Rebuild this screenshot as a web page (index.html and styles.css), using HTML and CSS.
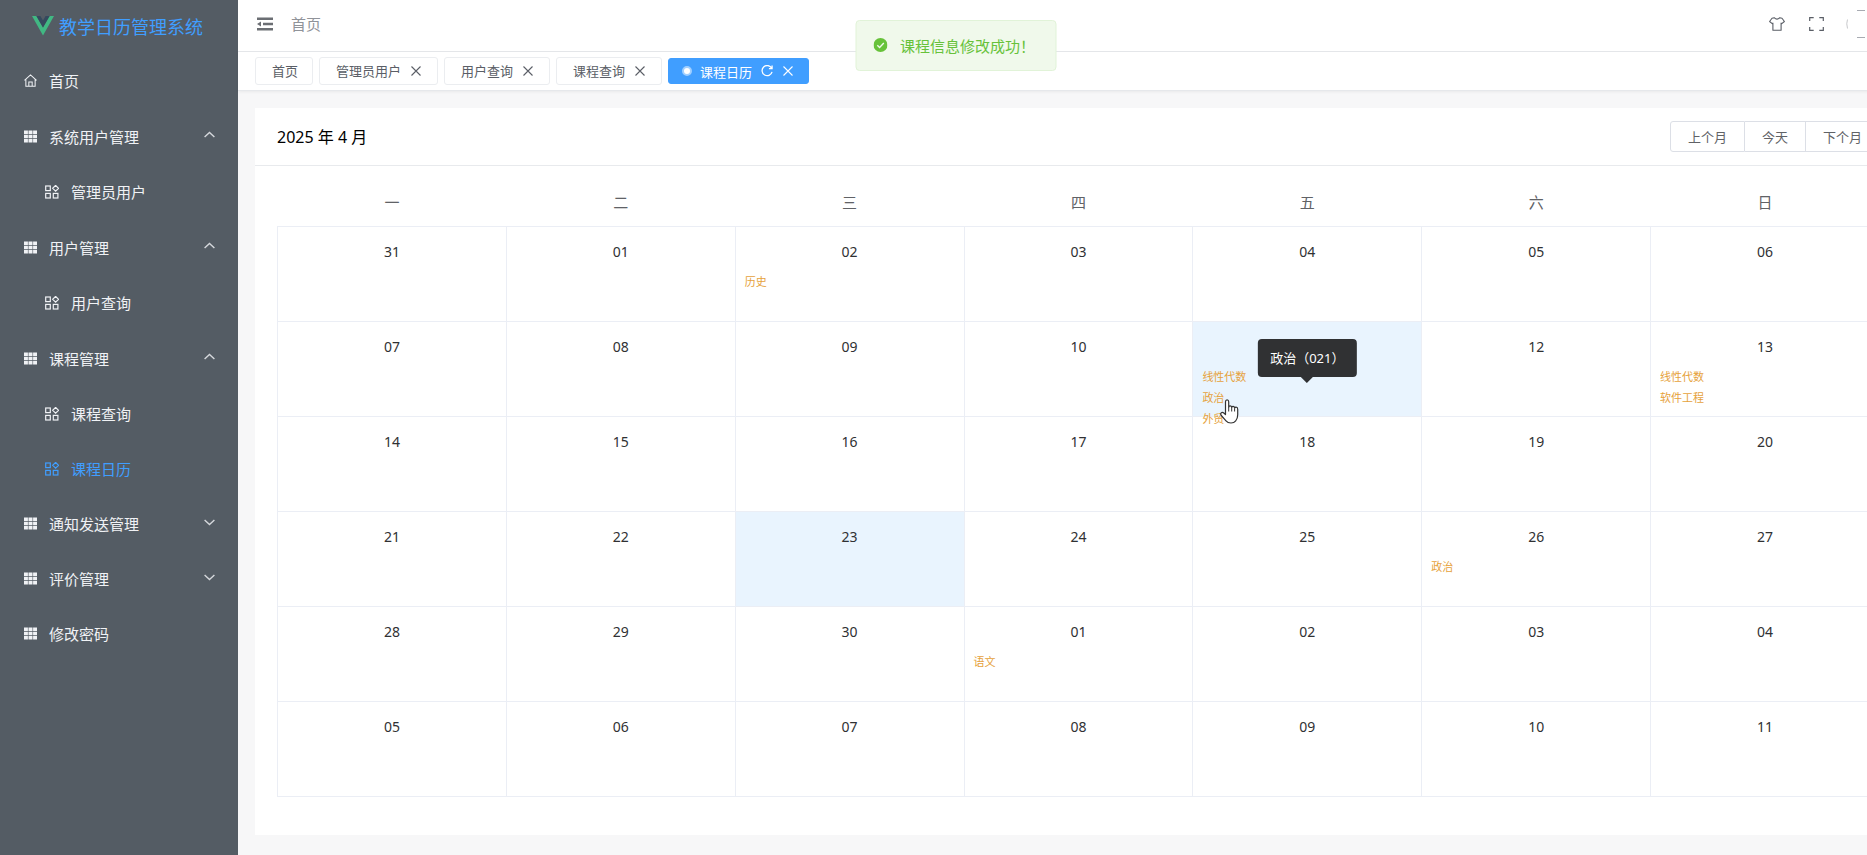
FILE: index.html
```html
<!DOCTYPE html>
<html lang="zh-CN">
<head>
    <meta charset="UTF-8">
    <meta name="viewport" content="width=device-width, initial-scale=1.0">
    <title>教学日历管理系统</title>
    <link rel="stylesheet" href="styles.css">
</head>
<body>
    <!-- shared icons -->
    <svg class="sprite" aria-hidden="true">
        <symbol id="i-grid" viewBox="0 0 13 13"><path fill="currentColor" d="M0 .5h3.9v3.6H0zM4.500.5h4v3.600h-4zM9.100.5H13v3.600H9.100zM0 4.700h3.900v3.600H0zM4.500 4.700h4v3.600h-4zM9.100 4.700H13v3.600H9.100zM0 8.900h3.900v3.600H0zM4.500 8.900h4v3.600h-4zM9.100 8.900H13v3.600H9.100z"/></symbol>
        <symbol id="i-menu" viewBox="0 0 14 14"><g fill="none" stroke="currentColor" stroke-width="1.2"><rect x=".7" y="1" width="4.6" height="4.6"/><path d="M10.6.4l2.9 2.9-2.9 2.9-2.9-2.9z"/><rect x=".7" y="8.4" width="4.6" height="4.6"/><rect x="8.3" y="8.4" width="4.6" height="4.6"/></g></symbol>
        <symbol id="i-close" viewBox="0 0 10 10"><path fill="none" stroke="currentColor" stroke-width="1.1" d="M.5.5l9 9M9.5.5l-9 9"/></symbol>
        <symbol id="i-arrow" viewBox="0 0 11 7"><path fill="none" stroke="currentColor" stroke-width="1.4" d="M.6 6l4.9-4.6L10.4 6"/></symbol>
    </svg>

    <div class="app">
        <aside class="sidebar">
            <div class="logo">
                <svg width="22" height="20" viewBox="0 0 22 20"><path fill="#41b883" d="M0 0h4.4L11 11.6 17.6 0H22L11 19.4z"/><path fill="#35495e" d="M4.4 0h4L11 4.6 13.600 0h4L11 11.600z"/></svg>
                <span>教学日历管理系统</span>
            </div>
            <nav class="menu">
                <a class="item" href="#">
                    <svg class="icon" viewBox="0 0 14 14"><path fill="none" stroke="currentColor" stroke-width="1.1" d="M.5 6.800L7 1l6.500 5.800M2 5.800v7.500h10V5.800M5.200 13.300V8.500h3.600v4.800"/></svg>
                    首页
                </a>
                <a class="item group" href="#"><svg class="icon"><use href="#i-grid"/></svg>系统用户管理<svg class="arrow"><use href="#i-arrow"/></svg></a>
                <a class="item sub" href="#"><svg class="icon"><use href="#i-menu"/></svg>管理员用户</a>
                <a class="item group" href="#"><svg class="icon"><use href="#i-grid"/></svg>用户管理<svg class="arrow"><use href="#i-arrow"/></svg></a>
                <a class="item sub" href="#"><svg class="icon"><use href="#i-menu"/></svg>用户查询</a>
                <a class="item group" href="#"><svg class="icon"><use href="#i-grid"/></svg>课程管理<svg class="arrow"><use href="#i-arrow"/></svg></a>
                <a class="item sub" href="#"><svg class="icon"><use href="#i-menu"/></svg>课程查询</a>
                <a class="item sub active" href="#"><svg class="icon"><use href="#i-menu"/></svg>课程日历</a>
                <a class="item" href="#"><svg class="icon"><use href="#i-grid"/></svg>通知发送管理<svg class="arrow down"><use href="#i-arrow"/></svg></a>
                <a class="item" href="#"><svg class="icon"><use href="#i-grid"/></svg>评价管理<svg class="arrow down"><use href="#i-arrow"/></svg></a>
                <a class="item" href="#"><svg class="icon"><use href="#i-grid"/></svg>修改密码</a>
            </nav>
        </aside>

        <div class="main">
            <header class="header">
                <button class="icon-btn" type="button" aria-label="折叠菜单">
                    <svg width="16" height="14" viewBox="0 0 16 14"><path fill="currentColor" d="M0 .5h16V3H0zM6 5.800h10v2.500H6zM0 11h16v2.500H0zM0 7l4-2.600v5.200z"/></svg>
                </button>
                <span class="crumb">首页</span>
                <div class="tools">
                    <button class="icon-btn" type="button" aria-label="主题">
                        <svg width="16" height="14" viewBox="0 0 16 14"><path fill="none" stroke="#5a5e66" stroke-width="1.100" stroke-linejoin="round" d="M5.200.700Q8 3.500 10.800.700L13 1.200l2.400 3.300-2.600 2.100-.700-.500v7.200H3.900V6.100l-.700.500L.600 4.500 3 1.200z"/></svg>
                    </button>
                    <button class="icon-btn" type="button" aria-label="全屏">
                        <svg width="16" height="14" viewBox="0 0 16 14"><path fill="none" stroke="#5a5e66" stroke-width="1.200" d="M.700 4V.700h4M10.300.700h4V4M14.300 10v3.300h-4M4.700 13.300h-4V10"/></svg>
                    </button>
                    <svg class="avatar" width="21" height="28" viewBox="0 0 21 28"><path fill="none" stroke="#c8c9cc" d="M2.500 9.500q-1.500 4 0 9"/><path stroke="#a8abb2" d="M12 .500h8M12 27.500h8"/></svg>
                </div>
            </header>

            <div class="tags">
                <a class="tag" href="#">首页</a>
                <a class="tag" href="#">管理员用户<svg class="close"><use href="#i-close"/></svg></a>
                <a class="tag" href="#">用户查询<svg class="close"><use href="#i-close"/></svg></a>
                <a class="tag" href="#">课程查询<svg class="close"><use href="#i-close"/></svg></a>
                <a class="tag current" href="#">
                    <span class="dot"></span>课程日历
                    <svg class="refresh" viewBox="0 0 13 13"><path fill="none" stroke="currentColor" stroke-width="1.400" d="M11.500 3.400A5.500 5.500 0 1 0 12 7.500M12 .600v3.400H8.600"/></svg>
                    <svg class="close"><use href="#i-close"/></svg>
                </a>
            </div>

            <main class="content">
                <section class="calendar">
                    <div class="cal-head">
                        <div class="cal-title">2025 年 4 月</div>
                        <div class="btns">
                            <button type="button">上个月</button>
                            <button type="button">今天</button>
                            <button type="button">下个月</button>
                        </div>
                    </div>
                    <div class="cal-body">
                        <table>
                            <thead>
                                <tr><th>一</th><th>二</th><th>三</th><th>四</th><th>五</th><th>六</th><th>日</th></tr>
                            </thead>
                            <tbody>
                                <tr>
                                    <td><div class="day"><p>31</p></div></td>
                                    <td><div class="day"><p>01</p></div></td>
                                    <td><div class="day"><p>02</p><span class="course">历史</span></div></td>
                                    <td><div class="day"><p>03</p></div></td>
                                    <td><div class="day"><p>04</p></div></td>
                                    <td><div class="day"><p>05</p></div></td>
                                    <td><div class="day"><p>06</p></div></td>
                                </tr>
                                <tr>
                                    <td><div class="day"><p>07</p></div></td>
                                    <td><div class="day"><p>08</p></div></td>
                                    <td><div class="day"><p>09</p></div></td>
                                    <td><div class="day"><p>10</p></div></td>
                                    <td class="on">
                                        <div class="day">
                                            <p>&nbsp;</p>
                                            <span class="course">线性代数</span>
                                            <span class="course">政治</span>
                                            <span class="course">外贸</span>
                                            <div class="tooltip" role="tooltip">政治（021）</div>
                                            <svg class="pointer" width="20" height="25" viewBox="0 0 20 25"><path fill="#fff" stroke="#333" stroke-width="1.200" stroke-linejoin="round" d="M5.500 15.500V2.700q0-1.900 1.600-1.900t1.600 1.900V8q.300-1.200 1.500-1.200T11.700 8.300q.400-.900 1.500-.900t1.400 1.500q.400-.700 1.500-.700 1.600 0 1.600 2v5.500q0 4-2 6.100-1.600 2.200-4.700 2.200-3.300 0-5-2.200L1.300 16.500q-1.100-1.600-.100-2.600 1.200-1 2.600.100z"/><path fill="none" stroke="#333" d="M8.700 8v4.500M11.700 8.500v4M14.600 9.200v3.300"/></svg>
                                        </div>
                                    </td>
                                    <td><div class="day"><p>12</p></div></td>
                                    <td><div class="day"><p>13</p><span class="course">线性代数</span><span class="course">软件工程</span></div></td>
                                </tr>
                                <tr>
                                    <td><div class="day"><p>14</p></div></td>
                                    <td><div class="day"><p>15</p></div></td>
                                    <td><div class="day"><p>16</p></div></td>
                                    <td><div class="day"><p>17</p></div></td>
                                    <td><div class="day"><p>18</p></div></td>
                                    <td><div class="day"><p>19</p></div></td>
                                    <td><div class="day"><p>20</p></div></td>
                                </tr>
                                <tr>
                                    <td><div class="day"><p>21</p></div></td>
                                    <td><div class="day"><p>22</p></div></td>
                                    <td class="on"><div class="day"><p>23</p></div></td>
                                    <td><div class="day"><p>24</p></div></td>
                                    <td><div class="day"><p>25</p></div></td>
                                    <td><div class="day"><p>26</p><span class="course">政治</span></div></td>
                                    <td><div class="day"><p>27</p></div></td>
                                </tr>
                                <tr>
                                    <td><div class="day"><p>28</p></div></td>
                                    <td><div class="day"><p>29</p></div></td>
                                    <td><div class="day"><p>30</p></div></td>
                                    <td><div class="day"><p>01</p><span class="course">语文</span></div></td>
                                    <td><div class="day"><p>02</p></div></td>
                                    <td><div class="day"><p>03</p></div></td>
                                    <td><div class="day"><p>04</p></div></td>
                                </tr>
                                <tr>
                                    <td><div class="day"><p>05</p></div></td>
                                    <td><div class="day"><p>06</p></div></td>
                                    <td><div class="day"><p>07</p></div></td>
                                    <td><div class="day"><p>08</p></div></td>
                                    <td><div class="day"><p>09</p></div></td>
                                    <td><div class="day"><p>10</p></div></td>
                                    <td><div class="day"><p>11</p></div></td>
                                </tr>
                            </tbody>
                        </table>
                    </div>
                </section>
            </main>
        </div>
    </div>

    <div class="message" role="alert">
        <svg width="14" height="14" viewBox="0 0 14 14"><circle cx="7" cy="7" r="7" fill="#67c23a"/><path fill="none" stroke="#f0f9eb" stroke-width="1.400" d="M3.800 7.200l2.300 2.200 4.200-4.300"/></svg>
        课程信息修改成功！
    </div>
</body>
</html>
```
FILE: styles.css
```css
* { box-sizing: border-box; }
body { margin: 0; overflow-x: hidden; font-family: "Noto Sans", "Noto Sans CJK SC", sans-serif; font-size: 15px; color: #303133; background: #f7f7f8; }
a { color: inherit; text-decoration: none; }
button { font-family: inherit; cursor: pointer; }
.sprite { display: none; }

/* the layout is a little wider than the window */
.app { display: flex; width: calc(100% + 52px); min-height: 100vh; }

/* sidebar */
.sidebar { flex: none; width: 238px; background: #545c64; color: #fff; }
.logo { display: flex; align-items: center; gap: 5px; height: 53px; padding: 0 0 2px 32px; color: #409eff; font-size: 18px; }
.item { display: flex; align-items: center; height: 55px; padding: 0 23px 0 24px; color: #f0f2f5; }
.item.group { height: 56px; }
.item.sub { padding-left: 45px; }
.item.active { color: #409eff; }
.icon { width: 13px; height: 13px; margin-right: 12px; }
.sub .icon { width: 14px; height: 14px; }
.arrow { width: 11px; height: 7px; margin: 0 0 3px auto; color: #d5d8dc; }
.arrow.down { transform: rotate(180deg); }

/* top bar */
.main { flex: 1; min-width: 0; }
.header { display: flex; align-items: center; height: 52px; padding: 0 53px 4px 19px; background: #fff; border-bottom: 1px solid #e6e8eb; }
.icon-btn { display: flex; padding: 0; border: 0; background: none; color: #6b6e73; }
.crumb { margin-left: 18px; color: #909399; }
.tools { display: flex; align-items: center; gap: 24px; margin-left: auto; }
.avatar { margin-left: -4px; }

/* opened pages */
.tags { display: flex; align-items: center; gap: 6px; height: 39px; padding: 0 17px; background: #fff; border-bottom: 1px solid #e6e8eb; box-shadow: 0 1px 3px rgba(0, 0, 0, 0.06); }
.tag { display: flex; align-items: center; height: 28px; padding: 0 14px 1px 16px; border: 1px solid #ebedf0; border-radius: 3px; background: #fff; color: #5a5e66; font-size: 13px; }
.close { width: 10px; height: 10px; margin: 0 2px 0 10px; }
.current { height: 26px; padding: 0 13px; border-color: #409eff; background: #409eff; color: #fff; }
.dot { width: 10px; height: 10px; margin-right: 8px; border: 2px solid #a0cfff; border-radius: 50%; background: #fff; }
.refresh { width: 12px; height: 12px; margin-left: 9px; }

/* calendar */
.content { padding: 17px 17px 20px; }
.calendar { background: #fff; }
.cal-head { display: flex; align-items: center; justify-content: space-between; height: 58px; padding: 0 22px; border-bottom: 1px solid #e8eaed; }
.cal-title { padding-bottom: 2px; color: #000; font-size: 16px; }
.btns { display: flex; }
.btns button { height: 31px; padding: 0 17px; border: 1px solid #dcdfe6; background: #fff; color: #606266; font-size: 13px; }
.btns button + button { border-left: 0; }
.btns button:first-child { border-radius: 3px 0 0 3px; }
.btns button:last-child { border-radius: 0 3px 3px 0; }
.cal-body { padding: 13px 22px 38px; }
table { width: 100%; table-layout: fixed; border-collapse: collapse; }
th { height: 47px; padding: 0 0 2px; color: #606266; font-weight: normal; }
td { height: 95px; padding: 0; border: 1px solid #ebeef5; vertical-align: top; }
td.on { background: #e9f4fe; }
.day { position: relative; height: 94px; padding: 8px 9px; }
.day p { margin: 0 0 2px; line-height: 34px; text-align: center; font-size: 14px; }
.course { display: block; line-height: 21px; color: #e6a23c; font-size: 11px; }

.tooltip { position: absolute; top: 17px; left: 50%; transform: translateX(-50%); padding: 0 12px; border-radius: 4px; background: #303133; color: #fff; font-size: 13px; line-height: 38px; white-space: nowrap; }
.tooltip::after { content: ""; position: absolute; top: 100%; left: 50%; margin-left: -6px; border: 6px solid transparent; border-top-color: #303133; border-bottom: 0; }
.pointer { position: absolute; top: 77px; left: 27px; }

.message { position: absolute; top: 20px; left: calc(50% + 22px); transform: translateX(-50%); display: flex; align-items: center; gap: 13px; width: 201px; height: 51px; padding: 0 0 1px 17px; border: 1px solid #e1f3d8; border-radius: 4px; background: #f0f9eb; color: #67c23a; white-space: nowrap; }
```
